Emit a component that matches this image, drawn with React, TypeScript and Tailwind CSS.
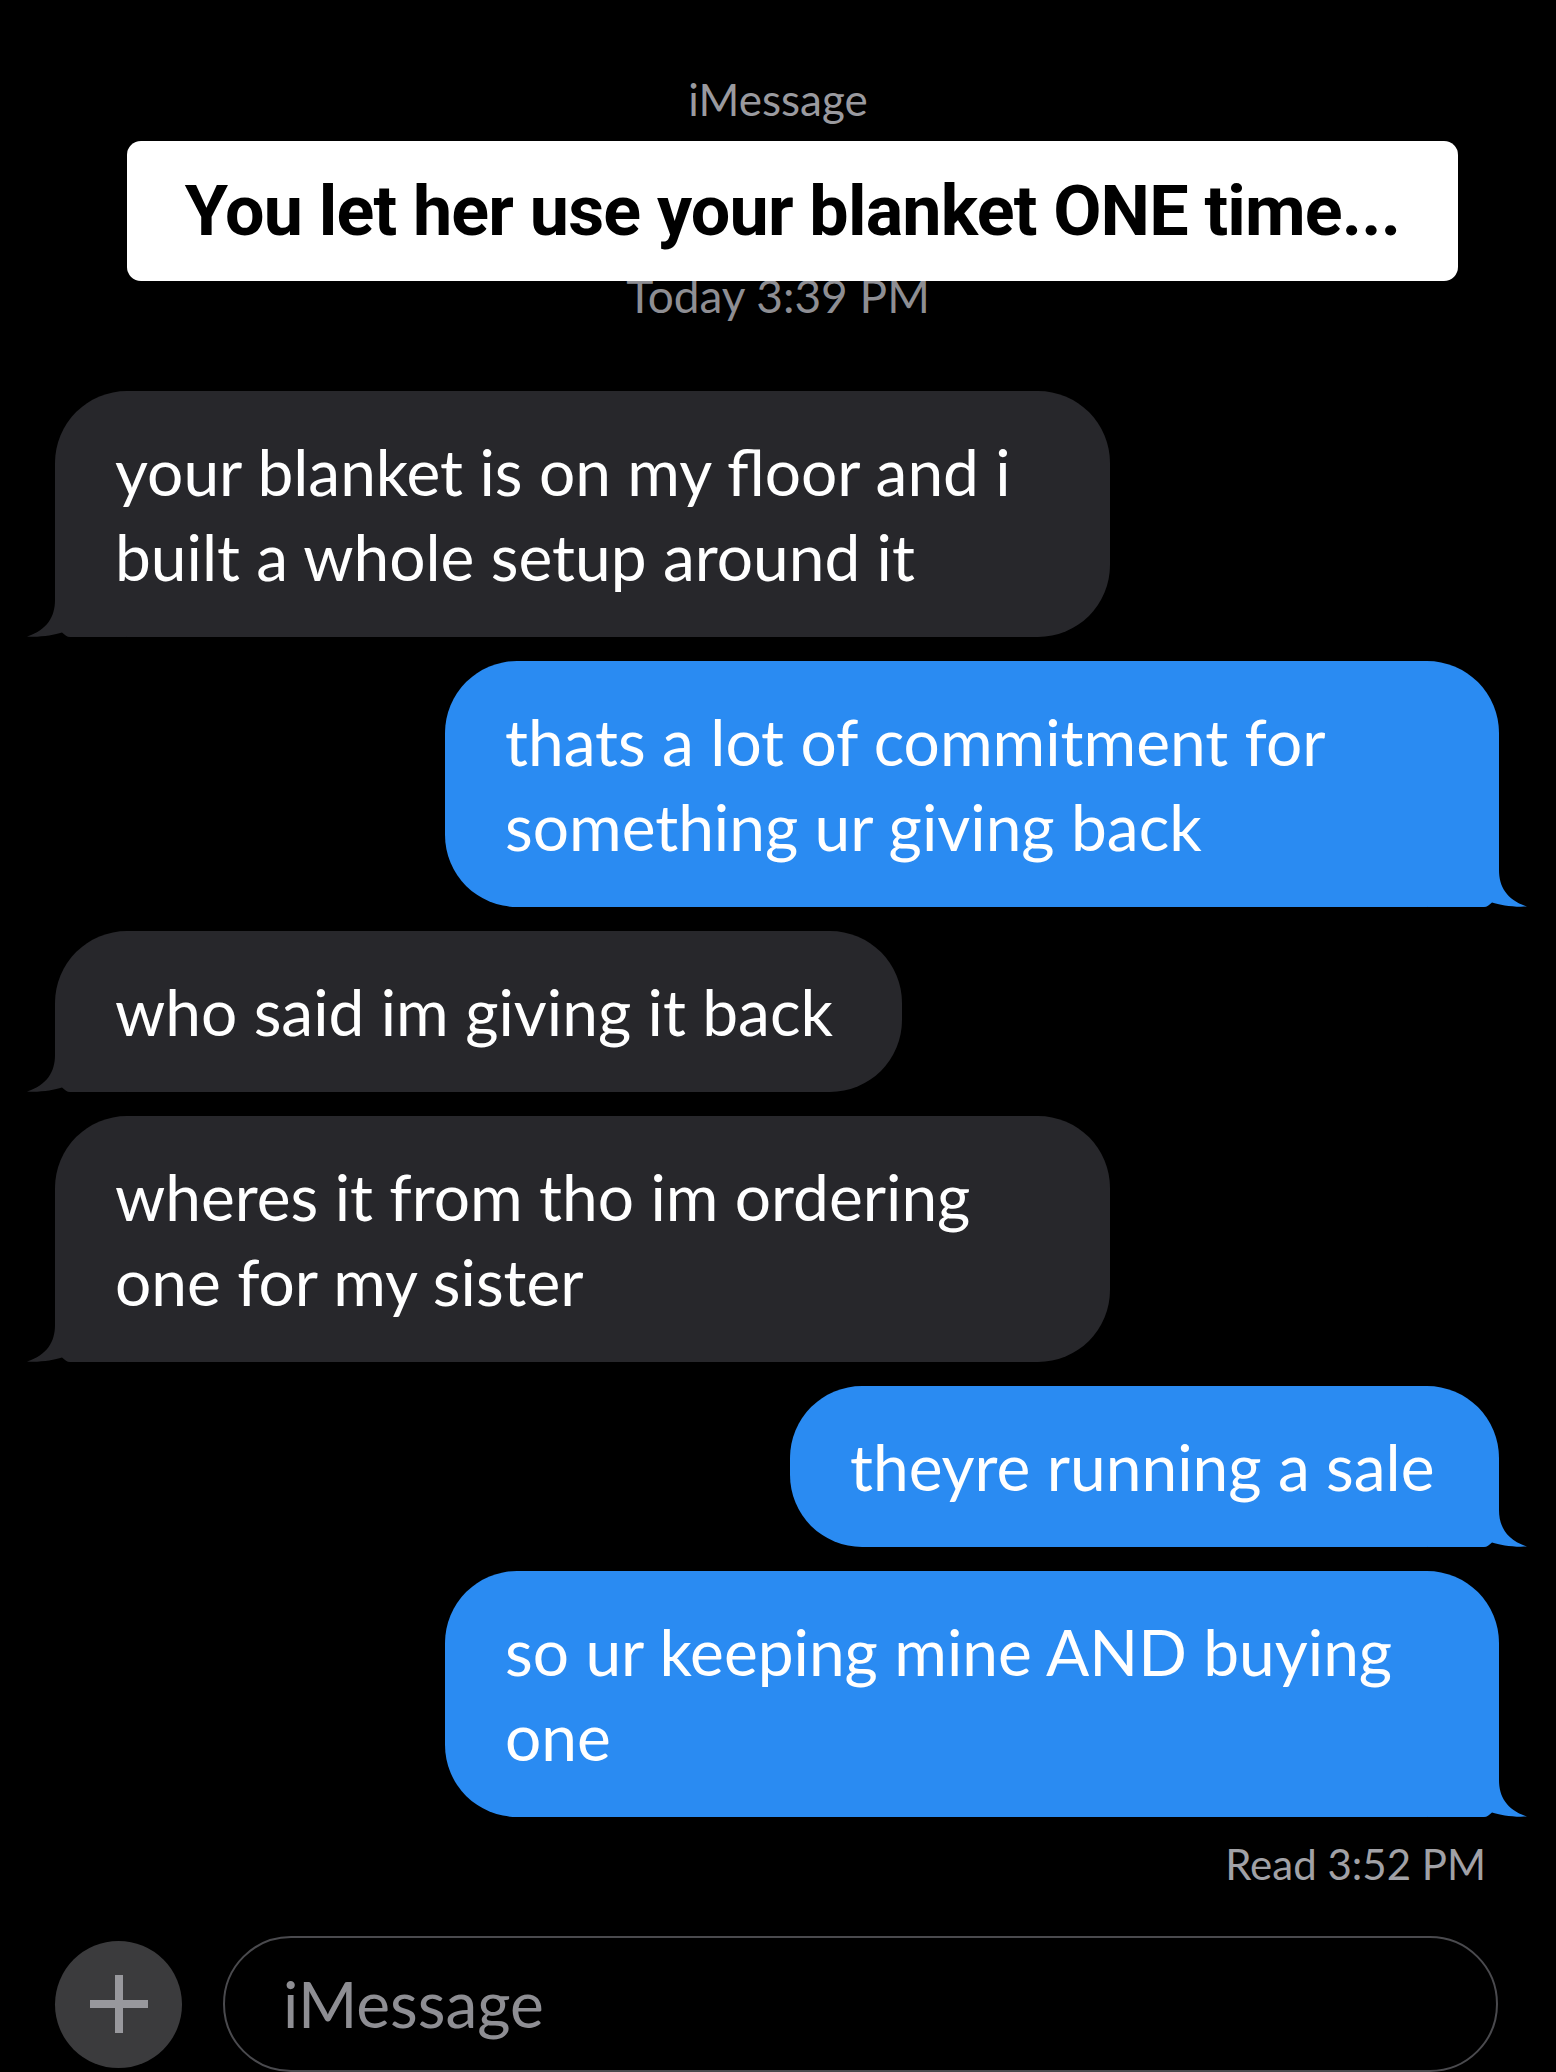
import React from 'react';

type Msg = { from: 'them' | 'me'; lines: string[]; width: number };

const messages: Msg[] = [
  { from: 'them', lines: ['your blanket is on my floor and i', 'built a whole setup around it'], width: 1055 },
  { from: 'me', lines: ['thats a lot of commitment for', 'something ur giving back'], width: 1054 },
  { from: 'them', lines: ['who said im giving it back'], width: 847 },
  { from: 'them', lines: ['wheres it from tho im ordering', 'one for my sister'], width: 1055 },
  { from: 'me', lines: ['theyre running a sale'], width: 709 },
  { from: 'me', lines: ['so ur keeping mine AND buying', 'one'], width: 1054 },
];

const TailLeft = () => (
  <svg
    className="absolute left-[-29px] bottom-0"
    width="100"
    height="80"
    viewBox="0 0 100 80"
  >
    <path
      d="M29 0 L29 43 C29 60 21 73 1 79.5 C14 80.5 28 78 36 75.5 C39 78 41 80 44 80 L100 80 L100 0 Z"
      fill="#27272b"
    />
  </svg>
);

const TailRight = () => (
  <svg
    className="absolute right-[-29px] bottom-0"
    width="100"
    height="80"
    viewBox="0 0 100 80"
  >
    <path
      d="M71 0 L71 43 C71 60 79 73 99 79.5 C86 80.5 72 78 64 75.5 C61 78 59 80 56 80 L0 80 L0 0 Z"
      fill="#2a8bf2"
    />
  </svg>
);

const Bubble: React.FC<{ msg: Msg }> = ({ msg }) => {
  const mine = msg.from === 'me';
  return (
    <div className={mine ? 'flex justify-end' : 'flex justify-start'}>
      <div
        className={
          'relative rounded-[72px] px-[60px] py-[38px] ' +
          (mine ? 'bg-[#2a8bf2]' : 'bg-[#27272b]')
        }
        style={{ width: msg.width }}
      >
        {mine ? <TailRight /> : <TailLeft />}
        <div className="relative text-white text-[64px] leading-[85px] whitespace-nowrap">
          {msg.lines.map((l, i) => (
            <div key={i}>{l}</div>
          ))}
        </div>
      </div>
    </div>
  );
};

export default function App() {
  return (
    <div
      className="relative w-[1556px] h-[2072px] bg-black overflow-hidden"
      style={{ fontFamily: 'Lato, "Open Sans", sans-serif' }}
    >
      {/* header */}
      <div className="flex flex-col items-center pt-[76px]">
        <div className="text-[44px] leading-[46px] text-[#9a9a9f]">iMessage</div>
        <div className="mt-[151px] text-[46px] leading-[46px] text-[#8e8e93]">Today 3:39 PM</div>
      </div>

      {/* caption overlay */}
      <div className="absolute left-[127px] top-[141px] w-[1331px] h-[140px] bg-white rounded-[14px] flex items-center justify-center">
        <span
          className="text-black text-[70px] font-bold tracking-[-0.8px]"
          style={{ fontFamily: 'Roboto, "Liberation Sans", sans-serif' }}
        >
          You let her use your blanket ONE time...
        </span>
      </div>

      {/* thread */}
      <div className="flex flex-col gap-6 mt-[72px] pl-[55px] pr-[57px]">
        {messages.map((m, i) => (
          <Bubble key={i} msg={m} />
        ))}
      </div>

      <div className="flex justify-end pr-[70px] mt-[23px]">
        <span className="text-[42px] leading-[48px] text-[#a1a1a6]">Read 3:52 PM</span>
      </div>

      {/* composer */}
      <div className="flex items-center gap-[41px] mt-[48px] pl-[55px]">
        <div className="w-[127px] h-[127px] rounded-full bg-[#3b3b3d] flex items-center justify-center">
          <svg width="58" height="58" viewBox="0 0 58 58">
            <rect x="0" y="25" width="58" height="8" fill="#98989d" />
            <rect x="25" y="0" width="8" height="58" fill="#98989d" />
          </svg>
        </div>
        <div className="w-[1275px] h-[136px] rounded-full border-2 border-[#4a4a4e] flex items-center pl-[58px]">
          <span className="text-[64px] text-[#8e8e93]">iMessage</span>
        </div>
      </div>
    </div>
  );
}
